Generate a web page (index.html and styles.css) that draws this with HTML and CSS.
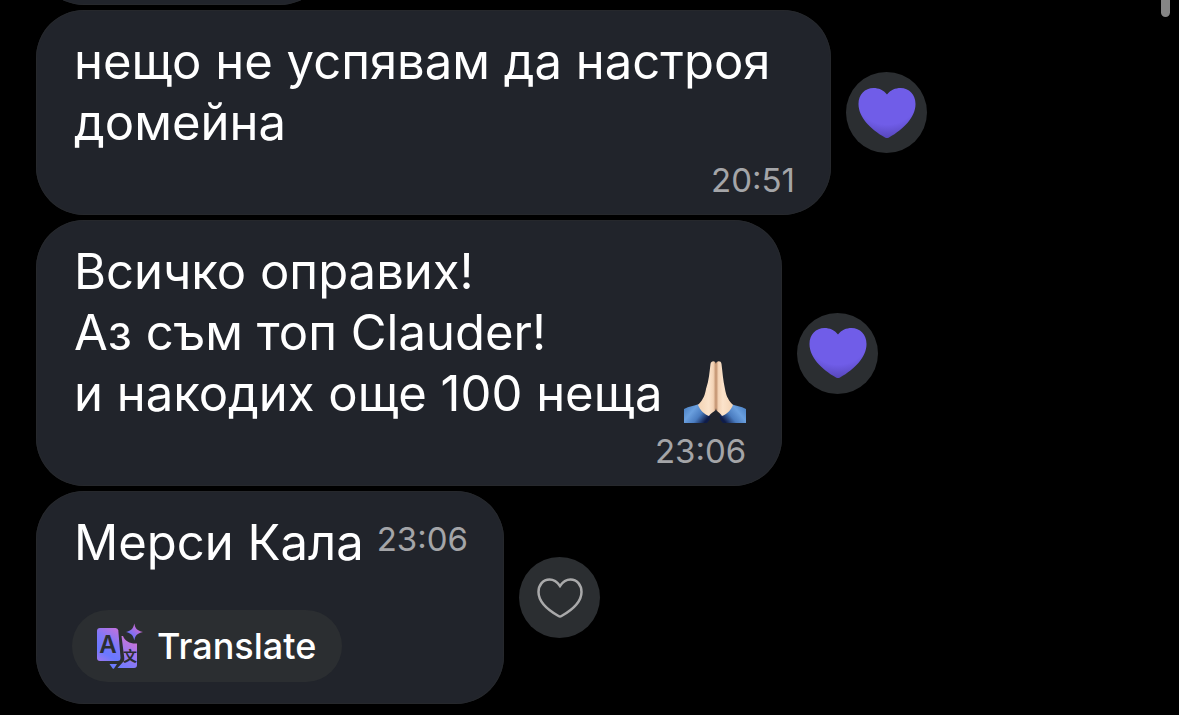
FILE: index.html
```html
<!DOCTYPE html>
<html lang="bg">
<head>
    <meta charset="UTF-8">
    <meta name="viewport" content="width=device-width, initial-scale=1.0">
    <title>Чат</title>
    <link rel="stylesheet" href="styles.css">
</head>
<body>
    <main class="chat">
        <div class="message">
            <div class="bubble bubble-cut"></div>
        </div>

        <div class="message">
            <div class="bubble bubble-wide">
                <p class="text">нещо не успявам да настроя<br>домейна</p>
                <time class="time">20:51</time>
            </div>
            <button class="reaction" aria-label="Харесано">
                <svg class="heart" viewBox="0 0 58 52">
                    <defs>
                        <radialGradient id="heartFill" cx="50%" cy="20%" r="82%">
                            <stop offset="0.65" stop-color="#705de8"/>
                            <stop offset="1" stop-color="#5545b8"/>
                        </radialGradient>
                    </defs>
                    <path fill="url(#heartFill)" d="M29 7.500C25.500 3 20.500 1 15.500 1C7 1 .5 7.500 .5 17C.5 30 12 42 27 50.500Q29 51.600 31 50.500C46 42 57.500 30 57.500 17C57.500 7.500 51 1 42.500 1C37.500 1 32.500 3 29 7.500Z"/>
                </svg>
            </button>
        </div>

        <div class="message">
            <div class="bubble">
                <p class="text">Всичко оправих!<br>Аз съм топ Clauder!<br>и накодих още 100 неща
                    <svg class="hands" viewBox="0 0 62 62" role="img" aria-label="🙏🏻">
                        <defs>
                            <linearGradient id="skinLeft" x1="0" x2="1">
                                <stop offset="0" stop-color="#f3d3b4"/>
                                <stop offset="0.6" stop-color="#fbe3cb"/>
                                <stop offset="0.85" stop-color="#f3d3b6"/>
                                <stop offset="1" stop-color="#c08f6c"/>
                            </linearGradient>
                            <linearGradient id="skinRight" x1="1" x2="0">
                                <stop offset="0" stop-color="#f3d3b4"/>
                                <stop offset="0.6" stop-color="#fbe3cb"/>
                                <stop offset="0.85" stop-color="#f3d3b6"/>
                                <stop offset="1" stop-color="#c08f6c"/>
                            </linearGradient>
                            <linearGradient id="sleeveLeft" x1="0" y1="0" x2="1" y2="0.6">
                                <stop offset="0" stop-color="#4379bd"/>
                                <stop offset="0.4" stop-color="#6a9fde"/>
                                <stop offset="0.7" stop-color="#4a7cc0"/>
                                <stop offset="1" stop-color="#0f1c48"/>
                            </linearGradient>
                            <linearGradient id="sleeveRight" x1="1" y1="0" x2="0" y2="0.6">
                                <stop offset="0" stop-color="#4379bd"/>
                                <stop offset="0.4" stop-color="#6a9fde"/>
                                <stop offset="0.7" stop-color="#4a7cc0"/>
                                <stop offset="1" stop-color="#0f1c48"/>
                            </linearGradient>
                        </defs>
                        <path fill="url(#sleeveLeft)" d="M0 48C5 45 10 45 15 43L26 54C27 57 25 60 23 62H0Z"/>
                        <path fill="url(#sleeveRight)" d="M62 48C57 45 52 45 47 43L36 54C35 57 37 60 39 62H62Z"/>
                        <path fill="url(#skinLeft)" d="M32 3C31 -1 27 0 26.500 3C25.500 11 25 19 22 28C21 33 20 38 14 44C16 49 20 53 25 55C27 51 32 51 32 47Z"/>
                        <path fill="url(#skinRight)" d="M32 3C32 0 37 -1 37.500 3C38.500 11 39 19 41 28C42 33 43 38 49 44C47 49 43 53 38 55C36 51 32 51 32 47Z"/>
                    </svg>
                </p>
                <time class="time">23:06</time>
            </div>
            <button class="reaction" aria-label="Харесано">
                <svg class="heart" viewBox="0 0 58 52">
                    <path fill="url(#heartFill)" d="M29 7.500C25.500 3 20.500 1 15.500 1C7 1 .5 7.500 .5 17C.5 30 12 42 27 50.500Q29 51.600 31 50.500C46 42 57.500 30 57.500 17C57.500 7.500 51 1 42.500 1C37.500 1 32.500 3 29 7.500Z"/>
                </svg>
            </button>
        </div>

        <div class="message">
            <div class="bubble bubble-last">
                <div class="line">
                    <p class="text">Мерси Кала</p>
                    <time class="time">23:06</time>
                </div>
                <button class="translate">
                    <svg class="translate-icon" viewBox="0 0 46 46">
                        <defs>
                            <linearGradient id="cardFill" gradientUnits="userSpaceOnUse" x1="24" y1="4" x2="2" y2="38">
                                <stop offset="0" stop-color="#d070d8"/>
                                <stop offset="0.45" stop-color="#8078f8"/>
                                <stop offset="0.75" stop-color="#6a78ff"/>
                                <stop offset="1" stop-color="#9a78f0"/>
                            </linearGradient>
                            <linearGradient id="backFill" gradientUnits="userSpaceOnUse" x1="40" y1="14" x2="22" y2="46">
                                <stop offset="0" stop-color="#d873cf"/>
                                <stop offset="0.5" stop-color="#9d78ee"/>
                                <stop offset="1" stop-color="#6a7bff"/>
                            </linearGradient>
                            <linearGradient id="starFill" x1="1" y1="0" x2="0" y2="1">
                                <stop offset="0.2" stop-color="#d46bd0"/>
                                <stop offset="0.7" stop-color="#6f70fa"/>
                            </linearGradient>
                        </defs>
                        <path fill="url(#cardFill)" d="M3 5H18.500Q21 5 21.300 7.500L23.500 34.500Q23.700 38 20.500 38H3Q0 38 0 35V8Q0 5 3 5Z"/>
                        <path fill="url(#backFill)" d="M24.500 13H26C28 18 33 21 40 20.500V42Q40 45 37 45H20.500L26.500 38.500Q27.500 37 27.300 35Z"/>
                        <path fill="url(#backFill)" d="M12.500 41H20L17 45.500Q16 46 15.500 45.300Z"/>
                        <path fill="url(#starFill)" d="M37.300 .5C38.500 6 40 7.500 46 9C40 10.500 38.500 12 37.300 17.500C36 12 34.500 10.500 29 9C34.500 7.500 36 6 37.300 .5Z"/>
                        <text class="glyph-a" x="11" y="30">A</text>
                        <text class="glyph-wen" x="33" y="38">文</text>
                    </svg>
                    <span lang="en">Translate</span>
                </button>
            </div>
            <button class="reaction" aria-label="Харесай">
                <svg class="heart-outline" viewBox="0 0 46 40">
                    <path d="M23 8C20 3.500 16.500 1.500 12.500 1.500C6 1.500 1.500 7 1.500 14C1.500 24 10 31.500 21.500 38Q23 38.900 24.500 38C36 31.500 44.500 24 44.500 14C44.500 7 40 1.500 33.500 1.500C29.500 1.500 26 3.500 23 8Z"/>
                </svg>
            </button>
        </div>
    </main>
    <div class="scroll-thumb"></div>
</body>
</html>
```

FILE: styles.css
```css
body {
    margin: 0;
    background: #000;
    color: #fff;
    font-family: Inter, "Noto Sans", sans-serif;
}
.chat {
    box-sizing: border-box;
    height: 100vh;
    padding: 0 36px 11px;
    display: flex;
    flex-direction: column;
    justify-content: flex-end;
    gap: 5px;
    overflow: hidden;
}
.message {
    display: flex;
    align-items: center;
    gap: 15px;
    flex-shrink: 0;
}
.bubble {
    display: flex;
    flex-direction: column;
    box-sizing: border-box;
    padding: 21px 36px 15px 38px;
    border-radius: 48px;
    background: #21242b;
    box-shadow: inset 0 0 0 1px #26282c;
}
.bubble-cut {
    width: 292px;
    height: 120px;
}
.bubble-wide {
    min-width: 795px;
}
.bubble-last {
    padding-bottom: 22px;
}
.text {
    margin: 0;
    font-size: 49px;
    line-height: 61px;
}
.time {
    align-self: flex-end;
    margin-top: 7px;
    font-size: 33px;
    line-height: 40px;
    color: #a4a5a8;
}
.line {
    display: flex;
    gap: 13px;
}
.line .time {
    align-self: flex-start;
    margin-top: 7px;
}
.hands {
    width: 62px;
    height: 62px;
    margin: -12px 0 -12px 8px;
    vertical-align: baseline;
}
.reaction {
    display: flex;
    align-items: center;
    justify-content: center;
    width: 81px;
    height: 81px;
    padding: 0;
    border: none;
    border-radius: 50%;
    background: #2b2e31;
    cursor: pointer;
}
.heart {
    width: 58px;
    height: 52px;
}
.heart-outline {
    width: 46px;
    height: 40px;
    fill: none;
    stroke: #a9a9aa;
    stroke-width: 2.5;
}
.translate {
    display: flex;
    align-items: center;
    align-self: flex-start;
    gap: 14px;
    height: 72px;
    margin: 37px 0 0 -2px;
    padding: 0 26px 0 25px;
    border: none;
    border-radius: 36px;
    background: #2b2e31;
    color: #fff;
    font-family: inherit;
    font-size: 36px;
    font-weight: 500;
    cursor: pointer;
}
.translate-icon {
    width: 46px;
    height: 46px;
}
.glyph-a {
    fill: #2b2e31;
    font-size: 24px;
    font-weight: 600;
    text-anchor: middle;
}
.glyph-wen {
    fill: #2b2e31;
    font-family: "Noto Sans CJK SC", sans-serif;
    font-size: 14px;
    font-weight: 700;
    text-anchor: middle;
}
.scroll-thumb {
    position: absolute;
    top: 0;
    right: 9px;
    width: 9px;
    height: 17px;
    border-radius: 0 0 5px 5px;
    background: #858585;
}
```
